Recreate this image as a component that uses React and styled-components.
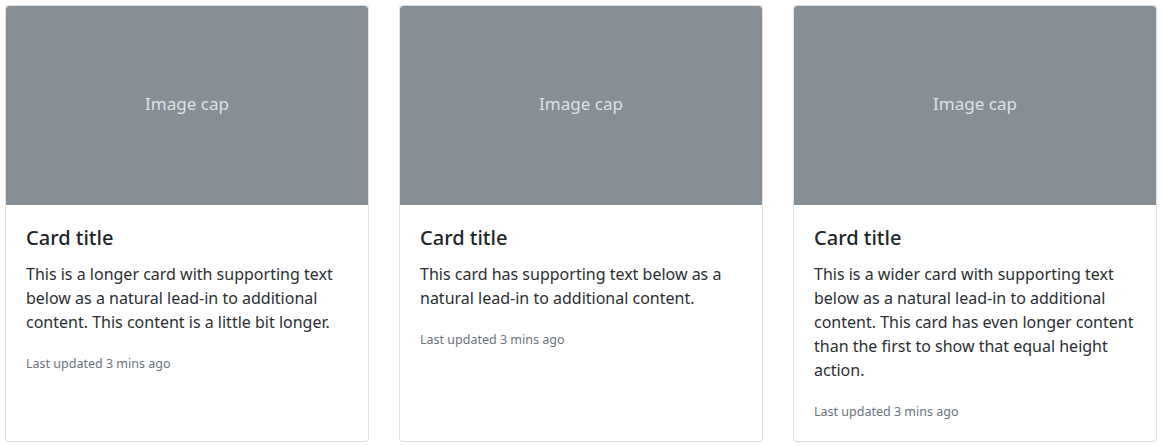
import React from 'react';
import styled, { createGlobalStyle } from 'styled-components';

const GlobalStyle = createGlobalStyle`
  body {
    margin: 0;
    background: #fff;
    font-family: "Segoe UI", "Noto Sans", sans-serif;
    color: #212529;
  }
`;

const CardGroup = styled.div`
  display: grid;
  grid-template-columns: repeat(3, 364px);
  gap: 30px;
  padding: 5px 0 0 5px;
`;

const Card = styled.div`
  display: flex;
  flex-direction: column;
  background: #fff;
  border: 1px solid rgba(0, 0, 0, 0.125);
  border-radius: 4px;
  overflow: hidden;
`;

const ImageCap = styled.div`
  height: 199px;
  padding-bottom: 4px;
  box-sizing: border-box;
  background: #868e96;
  color: #dee2e6;
  display: flex;
  align-items: center;
  justify-content: center;
  font-size: 17px;
  border-radius: 3px 3px 0 0;
`;

const CardBody = styled.div`
  flex: 1;
  padding: 21px 20px 17px;
`;

const CardTitle = styled.h5`
  margin: 0 0 12px;
  font-size: 20px;
  font-weight: 500;
  line-height: 1.2;
`;

const CardText = styled.p`
  margin: 0 0 16px;
  font-size: 16px;
  line-height: 24px;
  color: #2b2f33;
  &:last-child {
    margin-bottom: 0;
  }
`;

const Muted = styled.small`
  font-size: 12.5px;
  color: #6c757d;
`;

const cards = [
  'This is a longer card with supporting text below as a natural lead-in to additional content. This content is a little bit longer.',
  'This card has supporting text below as a natural lead-in to additional content.',
  'This is a wider card with supporting text below as a natural lead-in to additional content. This card has even longer content than the first to show that equal height action.',
];

export default function App() {
  return (
    <>
      <GlobalStyle />
      <CardGroup>
        {cards.map((text, i) => (
          <Card key={i}>
            <ImageCap>Image cap</ImageCap>
            <CardBody>
              <CardTitle>Card title</CardTitle>
              <CardText>{text}</CardText>
              <CardText>
                <Muted>Last updated 3 mins ago</Muted>
              </CardText>
            </CardBody>
          </Card>
        ))}
      </CardGroup>
    </>
  );
}
